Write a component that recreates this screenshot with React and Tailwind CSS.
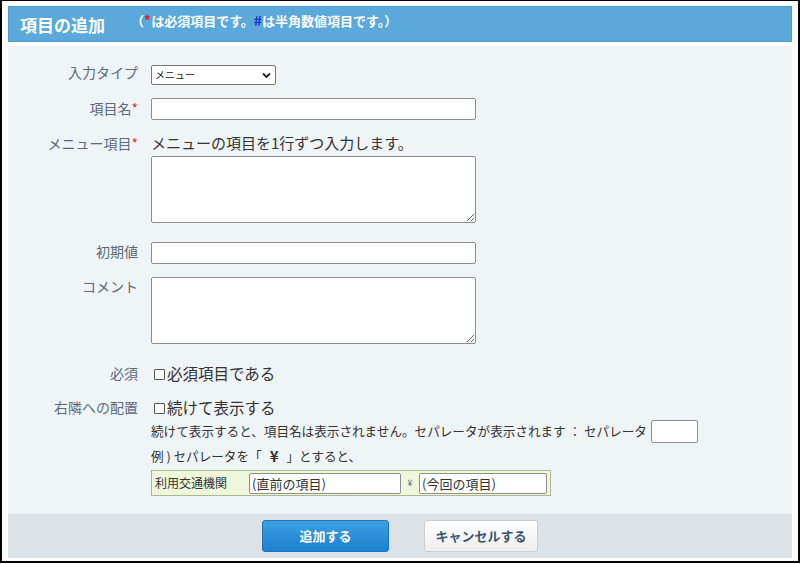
import React from "react";

const font = { fontFamily: '"Noto Sans CJK JP", "Noto Sans", sans-serif' };

function Label({ children, req }) {
  return (
    <div className="w-[130px] shrink-0 text-right text-[14px] leading-[18px] text-[#5b6b7a]">
      {children}
      {req && <span className="text-[#e0312d]">*</span>}
    </div>
  );
}

function Row({ label, req, className = "", labelClass = "", children }) {
  return (
    <div className={"flex items-start gap-[13px] " + className}>
      <div className={labelClass}>
        <Label req={req}>{label}</Label>
      </div>
      <div className="flex flex-col">{children}</div>
    </div>
  );
}

const inputCls =
  "block w-[325px] h-[22px] bg-white border border-[#8e8e8e] rounded-[2px] outline-none";
const taCls =
  "block w-[325px] h-[67px] bg-white border border-[#8e8e8e] rounded-[2px] outline-none";

function Box() {
  return <span className="inline-block w-[11px] h-[11px] border border-[#555] rounded-[1px] bg-white mr-[2px]" />;
}

export default function App() {
  return (
    <div className="w-[800px] h-[564px] bg-white" style={font}>
      <div className="h-[563px] border-l-2 border-r-2 border-t border-b-2 border-black px-[6px] pt-[5px] pb-[3px] flex flex-col">
        {/* Header */}
        <div className="h-[36px] bg-[#5aa9da] border border-[#4e9dcf] flex items-center pl-[11px]">
          <span className="text-white font-bold text-[17px] leading-none">項目の追加</span>
          <span className="text-white font-bold text-[13px] leading-none ml-[26px] -mt-[9px]">
            （<span className="text-[#e0202a] text-[14px]">*</span>は必須項目です。
            <span className="text-[#1b2fd0] text-[14px]">#</span>は半角数値項目です。）
          </span>
        </div>

        {/* Body */}
        <div className="mt-[4px] flex-1 bg-[#eff4f7] pt-[19px]">
          <Row label="入力タイプ" labelClass="-mt-[2px]">
            <div className="relative w-[125px] h-[20px]">
              <select className="block appearance-none w-[125px] h-[20px] bg-white border border-[#767676] rounded-[2px] text-[10px] leading-[18px] pl-[3px] py-0 text-[#222] outline-none">
                <option>メニュー</option>
              </select>
              <svg className="absolute right-[5px] top-[7px] pointer-events-none" width="9" height="7" viewBox="0 0 9 7">
                <path d="M1 1.5 L4.5 5 L8 1.5" stroke="#222" strokeWidth="1.8" fill="none" />
              </svg>
            </div>
          </Row>

          <Row label="項目名" req className="mt-[13px]" labelClass="pt-[1px]">
            <input className={inputCls} />
          </Row>

          <Row label="メニュー項目" req className="mt-[13px]" labelClass="pt-[1px]">
            <div className="text-[15px] leading-[20px] text-[#333]">メニューの項目を1行ずつ入力します。</div>
            <textarea className={taCls + " mt-[3px]"} />
          </Row>

          <Row label="初期値" className="mt-[19px]">
            <input className={inputCls} />
          </Row>

          <Row label="コメント" className="mt-[13px]">
            <textarea className={taCls} />
          </Row>

          <Row label="必須" className="mt-[20px]">
            <div className="flex items-center h-[20px] text-[15.5px] text-[#333] pl-[3px]">
              <Box />必須項目である
            </div>
          </Row>

          <Row label="右隣への配置" className="mt-[14px]">
            <div className="flex items-center h-[20px] text-[15.5px] text-[#333] pl-[3px]">
              <Box />続けて表示する
            </div>
            <div className="flex items-center h-[23px] mt-[2px] text-[12.6px] text-[#333]">
              続けて表示すると、項目名は表示されません。セパレータが表示されます ： セパレータ
              <input className="ml-[4px] w-[47px] h-[23px] bg-white border border-[#8e8e8e] rounded-[2px] outline-none" />
            </div>
            <div className="h-[20px] mt-[3px] flex items-center text-[12.6px] text-[#333]">
              例 ) セパレータを「<span className="font-bold text-[15px] mx-[8px]">¥</span>」とすると、
            </div>
            <div className="mt-[4px] w-[400px] h-[26px] bg-[#eef6dc] border border-[#a9b88f] flex items-center pl-[3px]">
              <span className="text-[12px] text-[#333] w-[94px]">利用交通機関</span>
              <div className="w-[152px] h-[21px] bg-white border border-[#8e8e8e] rounded-[2px] text-[13px] leading-[19px] pl-[2px] text-[#333]">(直前の項目)</div>
              <span className="text-[9px] text-[#666] w-[18px] text-center">¥</span>
              <div className="w-[128px] h-[21px] bg-white border border-[#8e8e8e] rounded-[2px] text-[13px] leading-[19px] pl-[2px] text-[#333]">(今回の項目)</div>
            </div>
          </Row>
        </div>

        {/* Footer */}
        <div className="h-[44px] bg-[#dce2e6] flex items-start justify-center gap-[35px] pt-[6px]">
          <button className="w-[127px] h-[32px] rounded-[3px] border border-[#1f73b7] bg-gradient-to-b from-[#3b9fe0] to-[#1a80d0] text-white font-bold text-[13px]">
            追加する
          </button>
          <button className="w-[114px] h-[32px] rounded-[3px] border border-[#c9cdd0] bg-gradient-to-b from-[#ffffff] to-[#eeeeee] text-[#3b5670] font-bold text-[13px]">
            キャンセルする
          </button>
        </div>
      </div>
    </div>
  );
}
